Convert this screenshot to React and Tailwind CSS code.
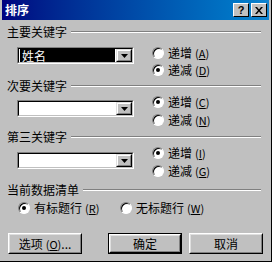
import React from 'react';

const font = { fontFamily: '"Noto Sans CJK SC", "Noto Sans", sans-serif' };

function Key({ k }) {
    return (
        <span className="ml-[3px] text-[11px]">
            (<span className="underline underline-offset-1">{k}</span>)
        </span>
    );
}

function Radio({ checked }) {
    return (
        <div className="w-[12px] h-[12px] rounded-full border border-t-[#808080] border-l-[#808080] border-b-white border-r-white bg-white shadow-[inset_1px_1px_0_#000] flex items-center justify-center">
            {checked && <div className="w-[4px] h-[4px] rounded-full bg-black" />}
        </div>
    );
}

function RadioItem({ label, k, checked, className = '' }) {
    return (
        <div className={`flex items-center ${className}`}>
            <Radio checked={checked} />
            <span className="ml-[4px] text-[12px] leading-[12px] text-black">
                {label}
                <Key k={k} />
            </span>
        </div>
    );
}

function Header({ text }) {
    return (
        <div className="flex items-center h-[12px] pl-[5px] pr-[8px]">
            <span className="text-[12px] leading-[12px] text-black whitespace-nowrap">{text}</span>
            <div className="flex-1 ml-[4px] border-t border-t-[#808080] border-b border-b-white" />
        </div>
    );
}

function Combo({ value }) {
    return (
        <div className="w-[117px] h-[17px] border border-t-[#808080] border-l-[#808080] border-b-white border-r-white">
            <div className="h-full border border-t-black border-l-black border-b-[#c0c0c0] border-r-[#c0c0c0] bg-white flex">
                <div className="flex-1 flex items-center pl-[1px] pr-[1px]">
                    {value && (
                        <div className="w-full h-full bg-black text-white text-[12px] leading-[12px] flex items-center pl-[2px]">
                            {value}
                        </div>
                    )}
                </div>
                <div className="w-[16px] h-full bg-[#c0c0c0] border border-t-[#dfdfdf] border-l-[#dfdfdf] border-b-black border-r-black">
                    <div className="h-full border border-t-white border-l-white border-b-[#808080] border-r-[#808080] flex items-center justify-center">
                        <svg width="7" height="4" viewBox="0 0 7 4">
                            <path d="M0 0h7L3.5 4z" fill="#000" />
                        </svg>
                    </div>
                </div>
            </div>
        </div>
    );
}

function Group({ value, up, down, rowH, comboTop, top, mt }) {
    return (
        <div className="flex pl-[15px]" style={{ marginTop: mt }}>
            <div style={{ marginTop: comboTop }}>
                <Combo value={value} />
            </div>
            <div className="ml-[18px] flex flex-col">
                <RadioItem label="递增" k={up[0]} checked={up[1]} className={rowH} />
                <RadioItem label="递减" k={down[0]} checked={down[1]} className={rowH} />
            </div>
        </div>
    );
}

function Button({ children, isDefault, className = '' }) {
    const inner = (
        <div className="h-full border border-t-white border-l-white border-b-black border-r-black">
            <div className="h-full border border-t-[#dfdfdf] border-l-[#dfdfdf] border-b-[#808080] border-r-[#808080] flex items-center justify-center text-[12px] leading-[12px] text-black">
                {children}
            </div>
        </div>
    );
    return (
        <div className={`h-[21px] ${isDefault ? 'border border-black' : ''} ${className}`}>
            {inner}
        </div>
    );
}

export default function App() {
    return (
        <div className="w-[272px] h-[262px] bg-[#c0c0c0] px-[2px] border-r border-b border-r-black border-b-black overflow-hidden" style={font}>
            <div className="h-[20px] bg-gradient-to-r from-[#000080] to-[#1084d0] flex items-center pl-[3px] pr-[2px]">
                <span className="text-white font-bold text-[12px] leading-[12px]">排序</span>
                <div className="flex-1" />
                <div className="w-[16px] h-[14px] bg-[#c0c0c0] border border-t-white border-l-white border-b-black border-r-black flex items-center justify-center text-[11px] font-bold leading-none text-black" style={{ fontFamily: '"Liberation Sans", sans-serif' }}>
                    ?
                </div>
                <div className="ml-[2px] w-[16px] h-[14px] bg-[#c0c0c0] border border-t-white border-l-white border-b-black border-r-black flex items-center justify-center">
                    <svg width="8" height="7" viewBox="0 0 8 7">
                        <path d="M0 0h2l2 2.5L6 0h2L5 3.5 8 7H6L4 4.5 2 7H0l3-3.5z" fill="#000" />
                    </svg>
                </div>
            </div>

            <div className="mt-[6px]"><Header text="主要关键字" /></div>
            <Group value="姓名" up={['A', false]} down={['D', true]} rowH="h-[17px]" comboTop={3} mt={6} />

            <div className="mt-[2px]"><Header text="次要关键字" /></div>
            <Group up={['C', true]} down={['N', false]} rowH="h-[18px]" comboTop={7} mt={1} />

            <div className="mt-[2px]"><Header text="第三关键字" /></div>
            <Group up={['I', true]} down={['G', false]} rowH="h-[18px]" comboTop={8} mt={1} />

            <div className="mt-[4px]"><Header text="当前数据清单" /></div>
            <div className="mt-[4px] h-[16px] flex items-center pl-[16px]">
                <RadioItem label="有标题行" k="R" checked className="w-[102px]" />
                <RadioItem label="无标题行" k="W" checked={false} />
            </div>

            <div className="mt-[17px] flex pl-[6px]">
                <Button className="w-[74px]">
                    选项<Key k="O" />...
                </Button>
                <Button isDefault className="w-[74px] ml-[26px]">确定</Button>
                <Button className="w-[74px] ml-[7px]">取消</Button>
            </div>
        </div>
    );
}
